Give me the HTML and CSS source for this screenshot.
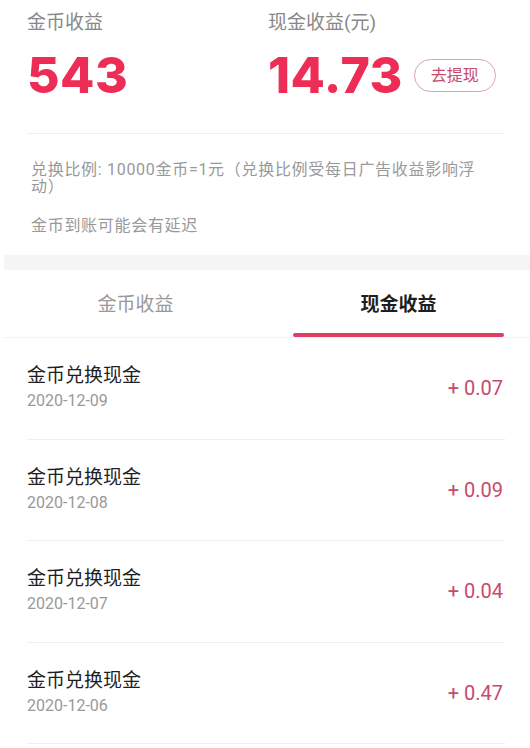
FILE: index.html
```html
<!DOCTYPE html>
<html lang="zh-CN">
<head>
  <meta charset="UTF-8" />
  <meta name="viewport" content="width=device-width, initial-scale=1.0" />
  <title>我的收益</title>
  <link rel="stylesheet" href="styles.css">
</head>
<body>
  <section class="summary">
    <div class="stat">
      <div class="label">金币收益</div>
      <div class="amount-row"><span class="big">543</span></div>
    </div>
    <div class="stat">
      <div class="label">现金收益(元)</div>
      <div class="amount-row">
        <span class="big">14.73</span>
        <button class="withdraw" type="button">去提现</button>
      </div>
    </div>
  </section>

  <section class="notice">
    <p>兑换比例: 10000金币=1元（兑换比例受每日广告收益影响浮动）</p>
    <p class="gap">金币到账可能会有延迟</p>
  </section>

  <div class="band"></div>

  <nav class="tabs">
    <div class="tab">金币收益</div>
    <div class="tab active">现金收益</div>
  </nav>

  <ul class="records" id="records"></ul>

<script>
const records=[
  {title:'金币兑换现金',date:'2020-12-09',amount:'0.07'},
  {title:'金币兑换现金',date:'2020-12-08',amount:'0.09'},
  {title:'金币兑换现金',date:'2020-12-07',amount:'0.04'},
  {title:'金币兑换现金',date:'2020-12-06',amount:'0.47'}
];
const list=document.getElementById('records');
list.innerHTML=records.map(r=>`
  <li class="record">
    <div class="info">
      <div class="title">${r.title}</div>
      <div class="date">${r.date}</div>
    </div>
    <div class="money">+ ${r.amount}</div>
  </li>`).join('');
</script>
</body>
</html>
```

FILE: styles.css
```css
:root{--red:#ee2d56;--pink:#c8496a;--text:#1f1f1f;--muted:#888;--line:#eeeeee}
*{box-sizing:border-box}
body{margin:0;background:#fff;color:var(--text);font-family:Roboto,"Noto Sans CJK SC",sans-serif}
p{margin:0}

.summary{display:grid;grid-template-columns:241px 1fr;margin:0 25px 0 27px;padding-top:10px;height:134px;border-bottom:1px solid var(--line)}
.label{font-size:19px;line-height:26px;color:var(--muted)}
.amount-row{display:flex;align-items:center;margin-top:14px;height:50px}
.big{font-family:Inter,Roboto,sans-serif;font-weight:800;font-size:50px;line-height:50px;color:var(--red);letter-spacing:.5px}
.withdraw{margin-left:11px;height:33px;padding:0 16px;border:1px solid #d9a3b0;border-radius:17px;background:#fff;color:var(--pink);font-family:inherit;font-size:16px;line-height:31px}

.notice{padding:27px 48px 21px 31px;font-size:16px;line-height:17px;letter-spacing:.7px;color:#999}
.notice .gap{margin-top:22px}

.band{height:15px;margin-left:4px;background:#f5f5f5}

.tabs{display:flex;margin-left:4px;border-bottom:1px solid #f2f2f2}
.tab{flex:1;display:flex;flex-direction:column;align-items:center;padding-top:22px;font-size:19px;line-height:26px;color:#999}
.tab::after{content:"";width:80%;height:4px;margin-top:15px;border-radius:2px;background:transparent}
.tab.active{color:var(--text);font-weight:700}
.tab.active::after{background:#de3d66}

.records{list-style:none;margin:0;padding:0 25px 0 27px}
.record{display:flex;align-items:center;justify-content:space-between;height:101.5px;border-bottom:1px solid var(--line)}
.title{font-size:19px;line-height:25px;color:var(--text)}
.date{font-size:16px;line-height:25px;color:#999}
.money{font-size:20px;color:var(--pink);margin-right:2px}
```
